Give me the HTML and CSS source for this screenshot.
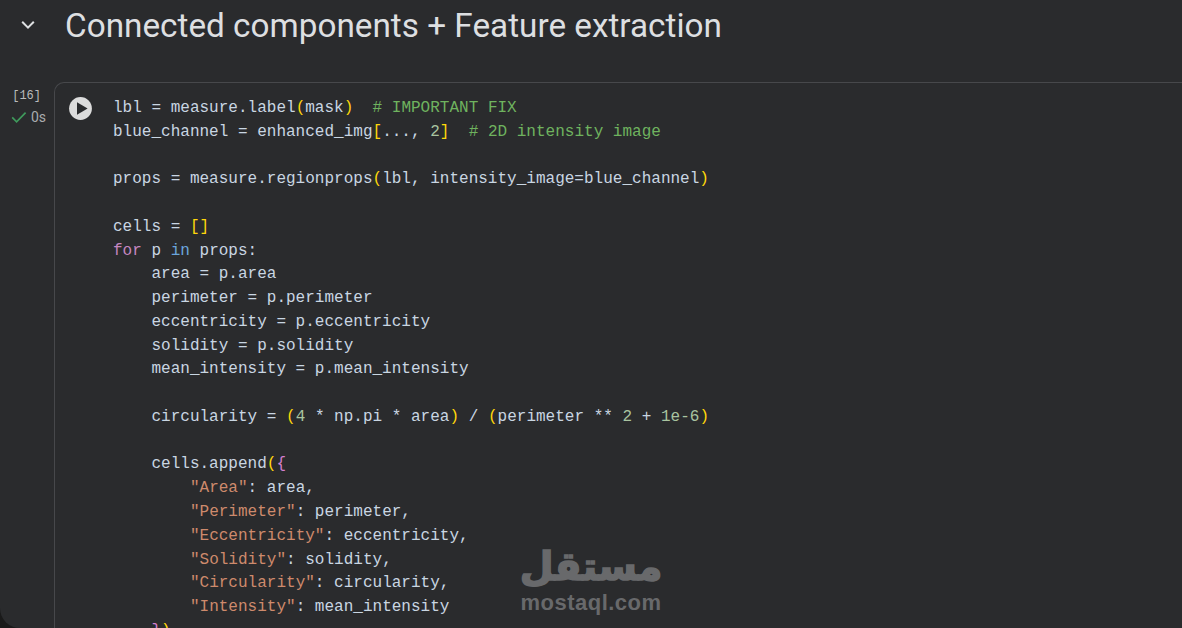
FILE: index.html
```html
<!DOCTYPE html>
<html lang="en">
<head>
<meta charset="utf-8">
<title>Connected components + Feature extraction</title>
<link rel="stylesheet" href="styles.css">
</head>
<body>
<div class="notebook">
  <header class="section">
    <svg class="chevron" width="16" height="16" viewBox="0 0 16 16"><path d="M2.2 4.8 8 10.6l5.8-5.8" fill="none" stroke="#dfe1e3" stroke-width="2"/></svg>
    <h1>Connected components + Feature extraction</h1>
  </header>
  <section class="cell-row">
    <div class="gutter">
      <div class="count">[16]</div>
      <div class="status">
        <svg width="16" height="14" viewBox="0 0 16 14"><path d="M1.2 7.4 5.6 11.8 14.6 2.6" fill="none" stroke="#3f9a5c" stroke-width="1.7"/></svg>
        <span>0s</span>
      </div>
    </div>
    <div class="cell">
      <button class="run" aria-label="Run cell">
        <svg width="24" height="24" viewBox="0 0 24 24"><circle cx="11.5" cy="11.5" r="11.4" fill="#dcdcdc"/><path d="M8 5.2v12.6l10.6-6.3z" fill="#2a2b2d"/></svg>
      </button>
      <div class="code">
        <div class="line">lbl = measure.label<span class="y">(</span>mask<span class="y">)</span>  <span class="c"># IMPORTANT FIX</span></div>
        <div class="line">blue_channel = enhanced_img<span class="y">[</span>..., <span class="n">2</span><span class="y">]</span>  <span class="c"># 2D intensity image</span></div>
        <div class="line"> </div>
        <div class="line">props = measure.regionprops<span class="y">(</span>lbl, intensity_image=blue_channel<span class="y">)</span></div>
        <div class="line"> </div>
        <div class="line">cells = <span class="y">[]</span></div>
        <div class="line"><span class="k">for</span> p <span class="b">in</span> props:</div>
        <div class="line">    area = p.area</div>
        <div class="line">    perimeter = p.perimeter</div>
        <div class="line">    eccentricity = p.eccentricity</div>
        <div class="line">    solidity = p.solidity</div>
        <div class="line">    mean_intensity = p.mean_intensity</div>
        <div class="line"> </div>
        <div class="line">    circularity = <span class="y">(</span><span class="n">4</span> * np.pi * area<span class="y">)</span> / <span class="y">(</span>perimeter ** <span class="n">2</span> + <span class="n">1e-6</span><span class="y">)</span></div>
        <div class="line"> </div>
        <div class="line">    cells.append<span class="y">(</span><span class="p">{</span></div>
        <div class="line">        <span class="s">"Area"</span>: area,</div>
        <div class="line">        <span class="s">"Perimeter"</span>: perimeter,</div>
        <div class="line">        <span class="s">"Eccentricity"</span>: eccentricity,</div>
        <div class="line">        <span class="s">"Solidity"</span>: solidity,</div>
        <div class="line">        <span class="s">"Circularity"</span>: circularity,</div>
        <div class="line">        <span class="s">"Intensity"</span>: mean_intensity</div>
        <div class="line">    <span class="p">}</span><span class="y">)</span></div>
      </div>
    </div>
  </section>
  <div class="watermark">
    <div class="wm-ar" lang="ar" dir="rtl">مستقل</div>
    <div class="wm-en">mostaql.com</div>
  </div>
</div>
</body>
</html>
```
FILE: styles.css
```css
* { box-sizing: border-box; }
html, body { margin: 0; height: 100%; overflow: hidden; background: #1a1a1a; }
.notebook {
  position: relative;
  height: 628px;
  background: #2a2b2d;
  border-bottom-left-radius: 20px;
  overflow: hidden;
  color: #d4d4d4;
}
.section {
  display: flex;
  align-items: center;
  height: 50px;
  padding-left: 20px;
}
.chevron { flex: none; }
h1 {
  margin: 2px 0 0 29px;
  font: 400 33.3px/50px Roboto, "Noto Sans", sans-serif;
  color: #dddfe1;
  white-space: nowrap;
}
.cell-row {
  display: flex;
  margin-top: 32px;
}
.gutter {
  flex: none;
  width: 54px;
  padding-top: 7px;
  font-size: 12px;
}
.count {
  font: 12px/14px "Liberation Mono", monospace;
  color: #b9bbbd;
  text-align: right;
  padding-right: 13px;
}
.status {
  display: flex;
  align-items: center;
  margin-top: 6px;
  padding-left: 11px;
  gap: 4px;
  font: 14px/16px Roboto, sans-serif;
  color: #a9abad;
}
.cell {
  display: flex;
  flex: 1;
  height: 560px;
  border-top: 1px solid #47484b;
  border-left: 1px solid #47484b;
  border-top-left-radius: 10px;
}
.run {
  flex: none;
  width: 24px;
  height: 24px;
  margin: 14px 0 0 14px;
  padding: 0;
  border: 0;
  background: none;
}
.run svg { display: block; }
.code {
  margin: 14px 0 0 20px;
  font: 16px/23.77px "Liberation Mono", monospace;
  letter-spacing: 0.01px;
  color: #c9d6e2;
}
.line { height: 23.77px; white-space: pre; }
.y { color: #ffd70a; }
.p { color: #d47fd0; }
.k { color: #c586c0; }
.b { color: #6aa5dc; }
.c { color: #6fb35f; }
.n { color: #a9c4a0; }
.s { color: #ce8a6c; }
.watermark {
  position: absolute;
  left: 519px;
  top: 543px;
  width: 144px;
  color: #68696b;
  text-align: center;
}
.wm-ar {
  font: 700 39px/48px "DejaVu Sans", sans-serif;
  -webkit-text-stroke: 1.6px #68696b;
  white-space: nowrap;
}
.wm-en {
  font: 700 22px/24px "Liberation Sans", sans-serif;
  letter-spacing: 0.5px;
  white-space: nowrap;
}
```
